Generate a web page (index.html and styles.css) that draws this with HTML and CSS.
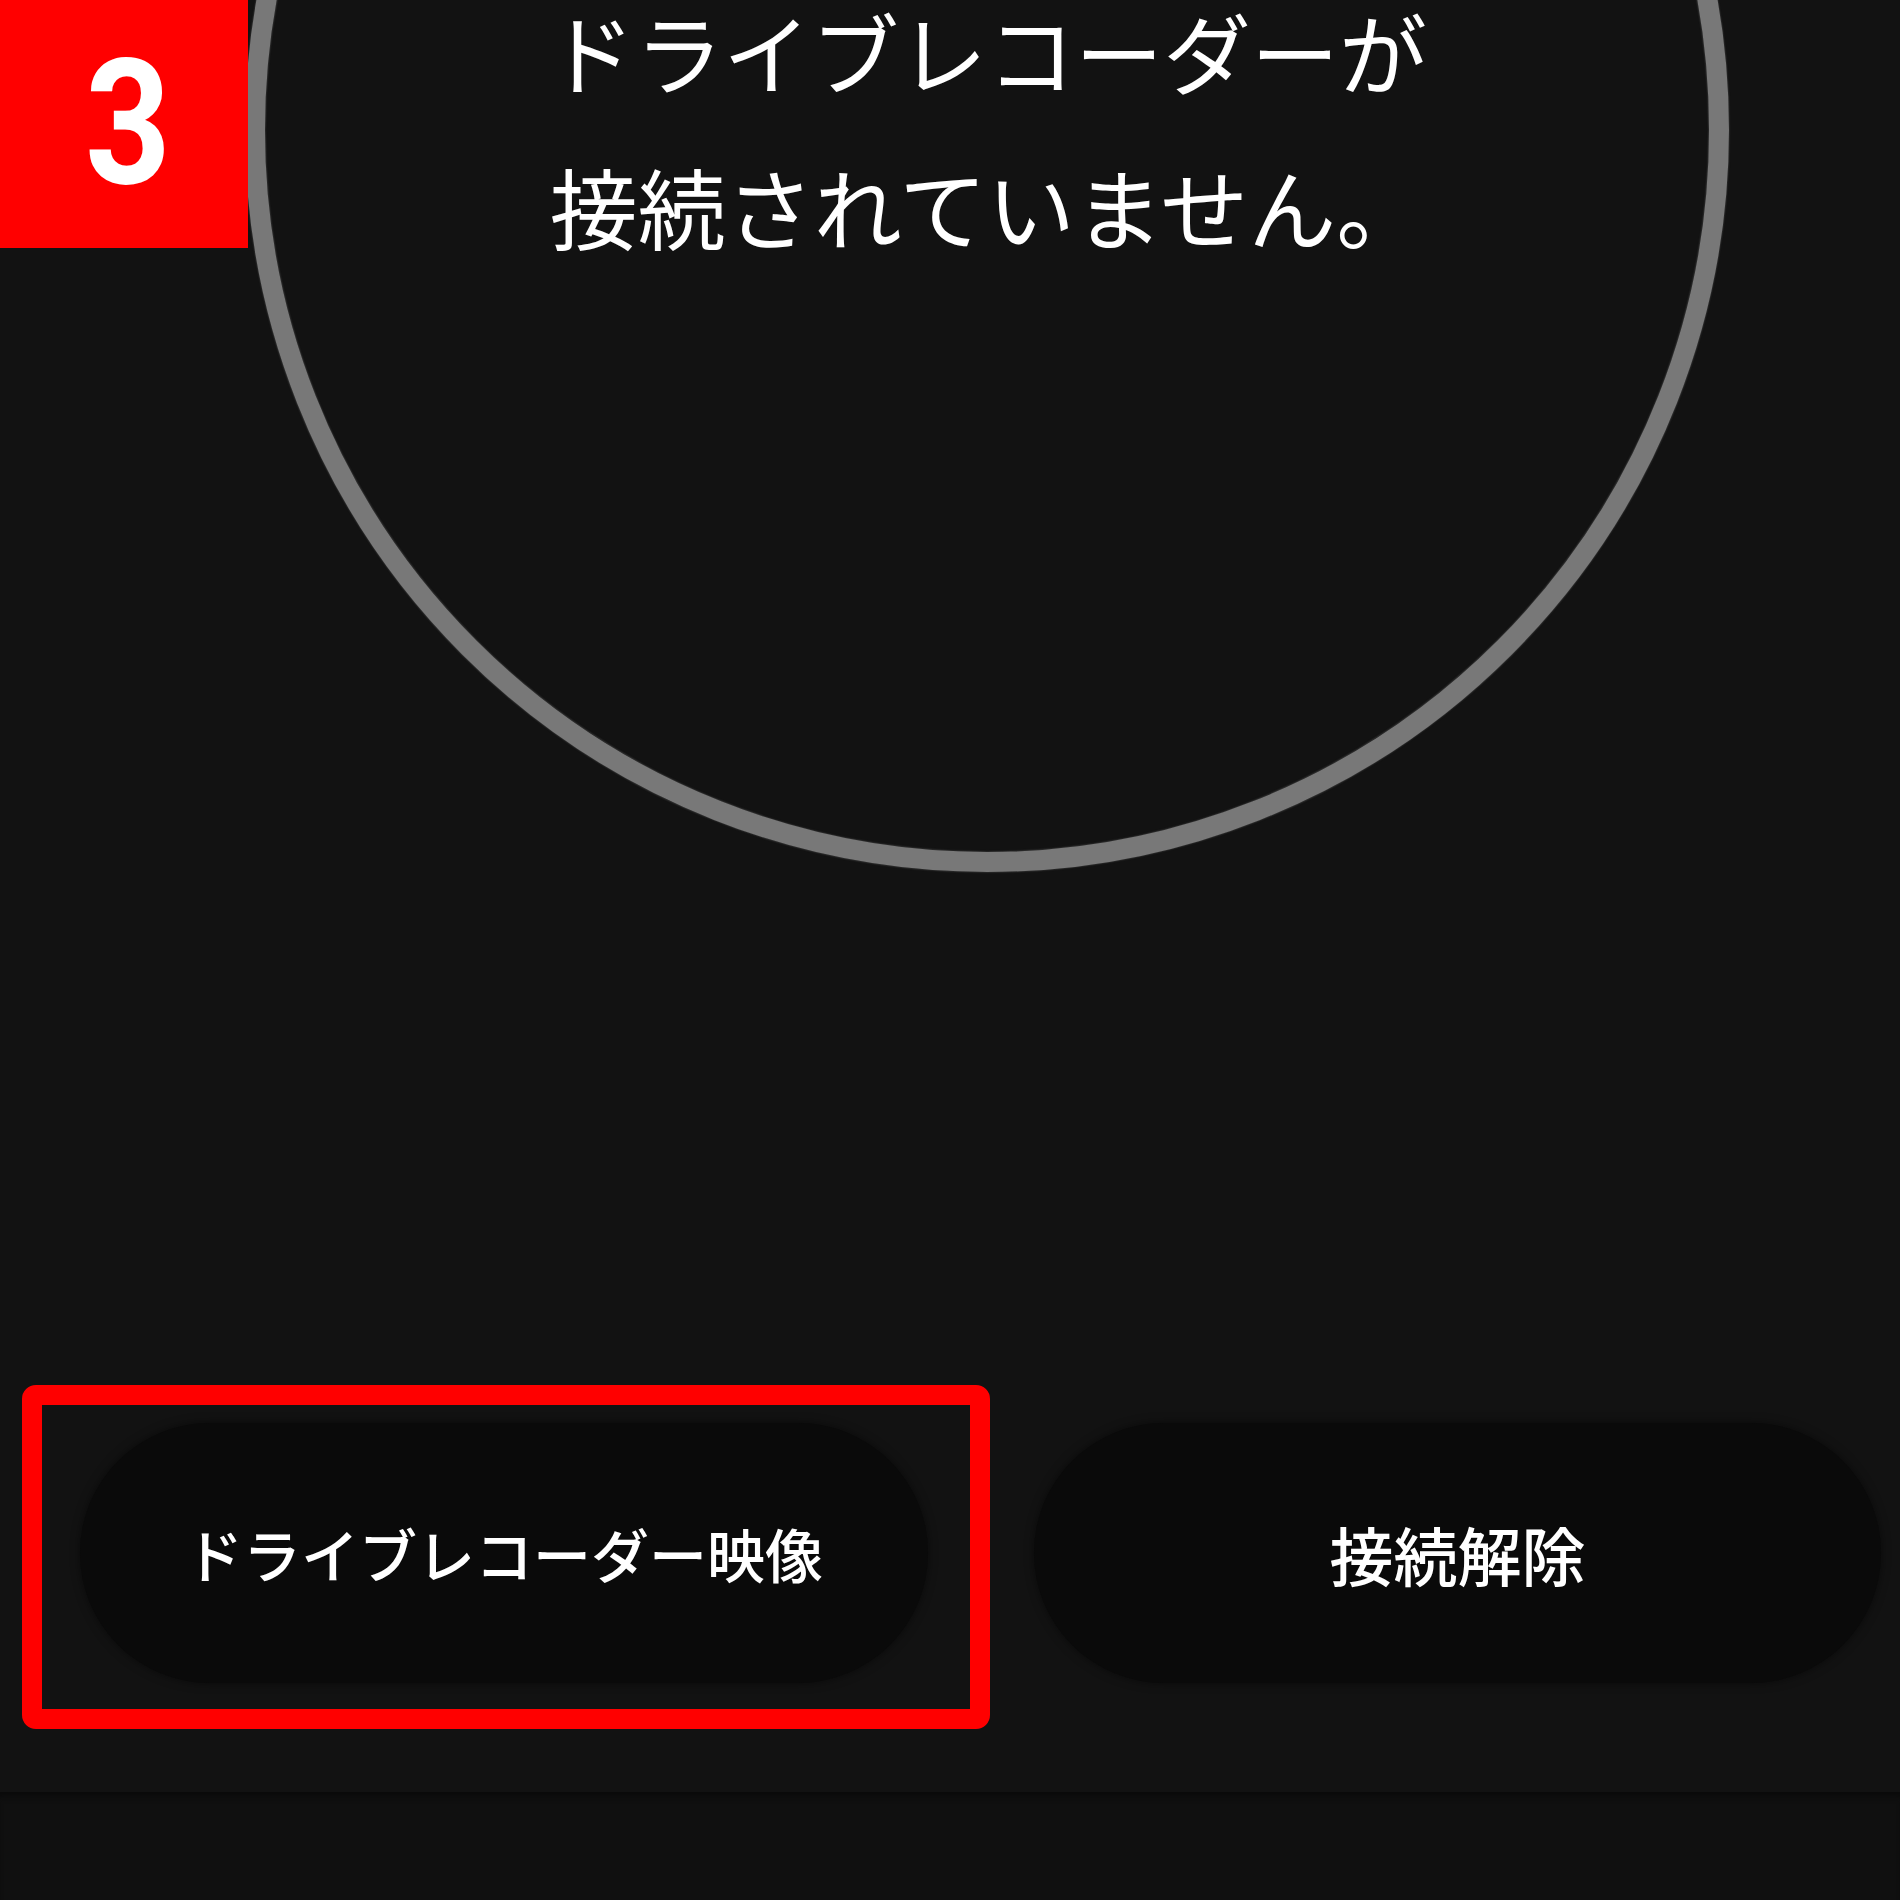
FILE: index.html
```html
<!DOCTYPE html>
<html>
<head>
  <meta charset="utf-8">
  <meta name="viewport" content="width=device-width, initial-scale=1">

  <title>ドライブレコーダー接続</title>
  <link rel="stylesheet" href="styles.css">
</head>
<body>

  <div class="screen">
    <div class="step-badge"><span class="step-num">3</span></div>

    <section class="status">
      <div class="status-ring">
        <p class="status-text">
          <span>ドライブレコーダーが</span>
          <span>接続されていません。</span>
        </p>
      </div>
    </section>

    <section class="actions">
      <div class="highlight">
        <button class="pill pill-video">ドライブレコーダー映像</button>
      </div>
      <button class="pill pill-plain">接続解除</button>
    </section>

    <div class="bottom-bar"></div>
  </div>

</body>
</html>
```

FILE: styles.css
```css
/* General Styling */
body {
  margin: 0;
  padding: 0;
  background-color: #121212;
  color: #fff;
  font-family: "Noto Sans CJK JP", "Noto Sans", sans-serif;
}

.screen {
  position: relative;
  display: flex;
  flex-direction: column;
  width: 1900px;
  height: 1900px;
  overflow: hidden;
}

/* Step number in the corner */
.step-badge {
  position: absolute;
  top: 0;
  left: 0;
  box-sizing: border-box;
  width: 248px;
  height: 248px;
  padding-left: 8px;
  display: flex;
  align-items: center;
  justify-content: center;
  background-color: #ff0000;
  color: #fff;
  font-family: Roboto, "Liberation Sans", sans-serif;
  font-weight: bold;
  font-size: 174px;
  line-height: 1;
}

.step-num {
  display: inline-block;
  transform: scaleX(0.86);
}

/* Connection status circle */
.status-ring {
  box-sizing: border-box;
  width: 1484px;
  height: 1484px;
  margin-top: -612px;
  margin-left: 245px;
  display: flex;
  align-items: center;
  justify-content: center;
  border: 20px solid #787878;
  border-radius: 50%;
  box-shadow: 0 0 2px rgba(120, 120, 120, 0.7), inset 0 0 2px rgba(120, 120, 120, 0.7);
}

.status-text {
  margin: 0 0 5px;
  display: flex;
  flex-direction: column;
  align-items: center;
  gap: 61px;
  font-size: 88px;
  font-weight: 400;
  line-height: 94px;
  color: #fff;
}

/* Buttons */
.actions {
  display: flex;
  align-items: flex-start;
  gap: 44px;
  margin-top: 513px;
  padding-left: 22px;
}

.highlight {
  box-sizing: border-box;
  width: 968px;
  height: 344px;
  padding: 18px 0 0 38px;
  border: 20px solid #ff0000;
  border-radius: 14px;
}

.pill {
  width: 848px;
  height: 260px;
  border: none;
  border-radius: 130px;
  background-color: #0a0a0a;
  color: #fff;
  font-family: inherit;
  font-size: 60px;
  font-weight: 500;
  box-shadow: 0 0 10px rgba(0, 0, 0, 0.5);
  cursor: pointer;
}

.pill-video {
  font-size: 58px;
}

.pill-plain {
  width: 847px;
  margin-top: 38px;
  font-size: 64px;
}

.bottom-bar {
  margin-top: auto;
  height: 108px;
  background-color: #101010;
  box-shadow: inset 0 8px 6px -4px #0a0a0a;
}
```
